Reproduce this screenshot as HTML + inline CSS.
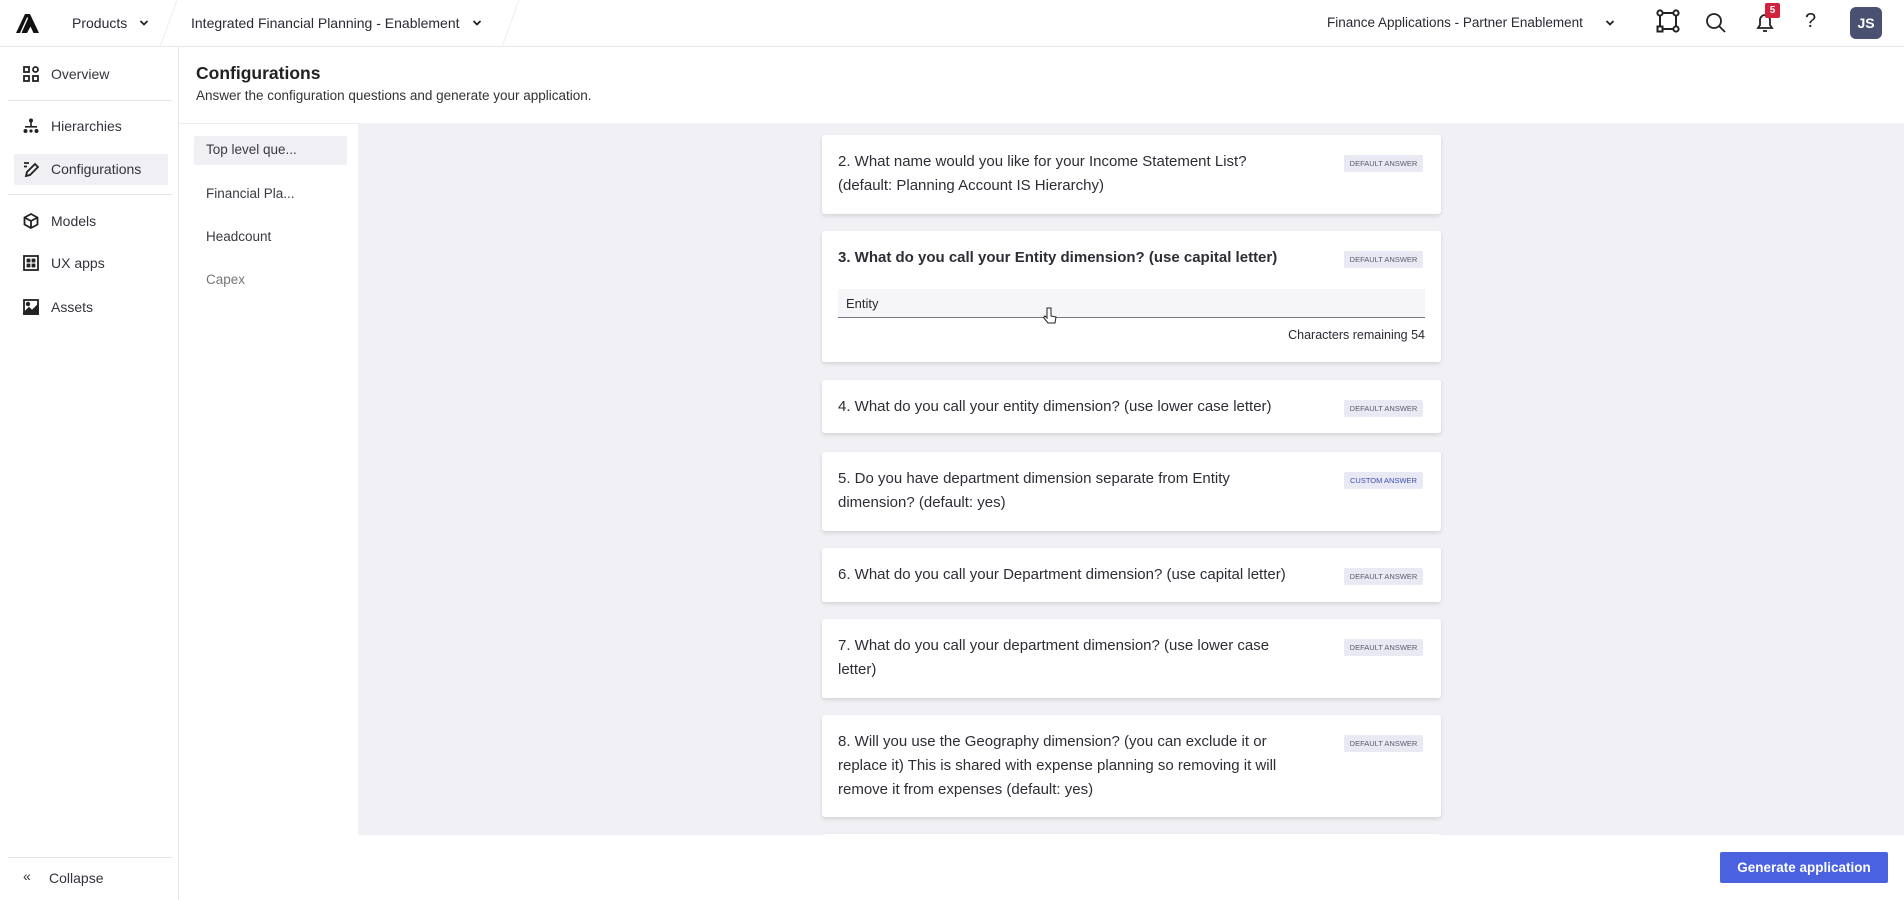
<!DOCTYPE html>
<html><head><meta charset="utf-8"><style>
*{box-sizing:border-box;margin:0;padding:0}
body{width:1904px;height:900px;overflow:hidden;background:#fff;font-family:"Liberation Sans",sans-serif;color:#2a2a33;position:relative}
.a{position:absolute}
.top{left:0;top:0;width:1904px;height:47px;border-bottom:1px solid #e6e6eb}
.t{font-size:14px;white-space:nowrap}
.side{left:0;top:47px;width:179px;height:853px;border-right:1px solid #e6e6eb}
.nav{left:51px;font-size:14px;color:#33333d}
.ic{left:23px;width:16px;height:16px}
.hr{height:1px;background:#e3e3e8}
.gray{left:358px;top:123px;width:1546px;height:712px;background:#f1f1f5;overflow:hidden}
.card{position:absolute;left:464px;width:619px;background:#fff;border-radius:3px;box-shadow:0 2px 4px rgba(0,0,0,.12)}
.q{position:absolute;left:16px;top:15px;font-size:15px;line-height:24px;color:#2d2d36;white-space:nowrap}
.b{position:absolute;right:18px;top:20px;width:79px;height:17px;background:#e8e9f3;border-radius:2px;font-size:7.5px;line-height:17px;text-align:center;color:#5a5c70;white-space:nowrap;overflow:hidden}
.sub{left:206px;font-size:13.5px;color:#3a3a44}
</style></head><body>
<div class="a top"></div>
<svg class="a" style="left:16px;top:14px" width="24" height="19" viewBox="0 0 24 19"><path d="M9 0h5l9 19h-5.5l-3-6.5L11 19H5.5L12 4.5 10.5 1z" fill="#111"/><path d="M9 0h3.5L4 19H0z" fill="#111"/></svg>
<div class="a t" style="left:72px;top:15px">Products</div>
<svg class="a" style="left:139px;top:19px" width="10" height="8" viewBox="0 0 10 8"><path d="M1.5 2l3.5 3.5L8.5 2" stroke="#222" stroke-width="1.8" fill="none"/></svg>
<div class="a" style="left:168px;top:0;width:1px;height:47px;background:#ececf0;transform:skewX(-20deg)"></div>
<div class="a t" style="left:191px;top:15px">Integrated Financial Planning - Enablement</div>
<svg class="a" style="left:472px;top:19px" width="10" height="8" viewBox="0 0 10 8"><path d="M1.5 2l3.5 3.5L8.5 2" stroke="#222" stroke-width="1.8" fill="none"/></svg>
<div class="a" style="left:510px;top:0;width:1px;height:47px;background:#ececf0;transform:skewX(-20deg)"></div>
<div class="a t" style="left:1327px;top:15px;font-size:13.5px">Finance Applications - Partner Enablement</div>
<svg class="a" style="left:1605px;top:19px" width="10" height="8" viewBox="0 0 10 8"><path d="M1.5 2l3.5 3.5L8.5 2" stroke="#222" stroke-width="1.8" fill="none"/></svg>
<svg class="a" style="left:1656px;top:9px" width="24" height="24" viewBox="0 0 24 24" fill="none" stroke="#222" stroke-width="2"><circle cx="4" cy="4" r="2.6"/><circle cx="20" cy="4" r="2.6"/><circle cx="20" cy="20" r="2.6"/><rect x="1.5" y="17.5" width="5" height="5"/><path d="M6.6 4h10.8M4 6.6v10.9M20 6.6v10.8M6.5 20h10.9"/></svg>
<svg class="a" style="left:1704px;top:11px" width="24" height="24" viewBox="0 0 24 24" fill="none" stroke="#222" stroke-width="1.8"><circle cx="10" cy="10" r="7"/><path d="M15 15l6 6"/></svg>
<svg class="a" style="left:1753px;top:10px" width="24" height="24" viewBox="0 0 24 24" fill="none" stroke="#222" stroke-width="1.8"><path d="M5 18h14l-2-3v-5a5 5 0 0 0-10 0v5z"/><path d="M10 21h4"/></svg>
<div class="a" style="left:1765px;top:3px;width:15px;height:15px;background:#d3203d;color:#fff;font-size:10px;font-weight:bold;text-align:center;line-height:15px;border-radius:2px">5</div>
<div class="a" style="left:1805px;top:10px;font-size:20px;color:#222">?</div>
<div class="a" style="left:1850px;top:7px;width:32px;height:32px;background:#4a5070;border-radius:6px;color:#fff;font-size:14px;font-weight:bold;text-align:center;line-height:32px">JS</div>

<div class="a side"></div>
<svg class="a ic" style="top:66px" viewBox="0 0 16 16" fill="none" stroke="#222" stroke-width="1.8"><rect x="1" y="1" width="5" height="5"/><rect x="10" y="1" width="5" height="5" rx="2.5"/><rect x="1" y="10" width="5" height="5"/><rect x="10" y="10" width="5" height="5"/></svg>
<div class="a nav" style="top:66px">Overview</div>
<div class="a hr" style="left:8px;top:100px;width:164px"></div>
<svg class="a ic" style="top:118px" viewBox="0 0 16 16" fill="#222"><circle cx="8" cy="2.5" r="2"/><rect x="7.2" y="4" width="1.6" height="5"/><rect x="2" y="8" width="12" height="1.6"/><circle cx="2.5" cy="13" r="2"/><circle cx="13.5" cy="13" r="2"/><circle cx="8" cy="13" r="1.6"/></svg>
<div class="a nav" style="top:118px">Hierarchies</div>
<div class="a" style="left:14px;top:154px;width:154px;height:31px;background:#efeff4;border-radius:2px"></div>
<svg class="a ic" style="top:161px" viewBox="0 0 16 16" fill="none" stroke="#222" stroke-width="1.8"><path d="M1 2h5M1 5.5h3M3 15l1-4 8-8 3 3-8 8z"/></svg>
<div class="a nav" style="top:161px">Configurations</div>
<div class="a hr" style="left:8px;top:194px;width:164px"></div>
<svg class="a ic" style="top:213px" viewBox="0 0 16 16" fill="none" stroke="#222" stroke-width="1.8"><path d="M8 1l6.5 3.5v7L8 15l-6.5-3.5v-7z M1.5 4.5L8 8l6.5-3.5M8 8v7"/></svg>
<div class="a nav" style="top:213px">Models</div>
<svg class="a ic" style="top:255px" viewBox="0 0 16 16" fill="none" stroke="#222" stroke-width="1.8"><rect x="1" y="1" width="14" height="14"/><rect x="4.5" y="4.5" width="2" height="2" fill="#222"/><rect x="9.5" y="4.5" width="2" height="2" fill="#222"/><rect x="4.5" y="9.5" width="2" height="2" fill="#222"/><rect x="9.5" y="9.5" width="2" height="2" fill="#222"/></svg>
<div class="a nav" style="top:255px">UX apps</div>
<svg class="a ic" style="top:299px" viewBox="0 0 16 16" fill="none" stroke="#222" stroke-width="1.8"><rect x="1" y="1" width="14" height="14"/><path d="M1 14l5-5 3 3 6-6v9H1z" fill="#222"/><circle cx="5" cy="5" r="1.3" fill="#222"/></svg>
<div class="a nav" style="top:299px">Assets</div>
<div class="a hr" style="left:8px;top:857px;width:164px"></div>
<div class="a" style="left:23px;top:868px;font-size:14px;color:#333">«</div>
<div class="a nav" style="left:49px;top:870px">Collapse</div>

<div class="a" style="left:196px;top:63px;font-size:17.5px;font-weight:bold;color:#222">Configurations</div>
<div class="a" style="left:196px;top:88px;font-size:13.5px;color:#333">Answer the configuration questions and generate your application.</div>
<div class="a" style="left:179px;top:123px;width:1725px;height:1px;background:#ececf0"></div>
<div class="a" style="left:194px;top:136px;width:153px;height:29px;background:#efeff4;border-radius:2px"></div>
<div class="a sub" style="top:142px">Top level que...</div>
<div class="a sub" style="top:186px">Financial Pla...</div>
<div class="a sub" style="top:229px">Headcount</div>
<div class="a sub" style="top:272px;color:#777">Capex</div>

<div class="a gray">
<div class="card" style="top:12px;height:79px"><div class="q">2. What name would you like for your Income Statement List?<br>(default: Planning Account IS Hierarchy)</div><div class="b">DEFAULT ANSWER</div></div>
<div class="card" style="top:108px;height:131px"><div class="q" style="font-weight:bold">3. What do you call your Entity dimension? (use capital letter)</div><div class="b">DEFAULT ANSWER</div>
<div style="position:absolute;left:16px;top:58px;width:587px;height:29px;background:#f6f6f8;border-bottom:1px solid #77788a;font-size:13px;line-height:29px;padding-left:8px">Entity</div>
<div style="position:absolute;right:16px;top:97px;font-size:12.5px">Characters remaining 54</div></div>
<div class="card" style="top:257px;height:53px"><div class="q">4. What do you call your entity dimension? (use lower case letter)</div><div class="b">DEFAULT ANSWER</div></div>
<div class="card" style="top:329px;height:79px"><div class="q">5. Do you have department dimension separate from Entity<br>dimension? (default: yes)</div><div class="b" style="color:#3e4fb5">CUSTOM ANSWER</div></div>
<div class="card" style="top:425px;height:54px"><div class="q">6. What do you call your Department dimension? (use capital letter)</div><div class="b">DEFAULT ANSWER</div></div>
<div class="card" style="top:496px;height:79px"><div class="q">7. What do you call your department dimension? (use lower case<br>letter)</div><div class="b">DEFAULT ANSWER</div></div>
<div class="card" style="top:592px;height:102px"><div class="q">8. Will you use the Geography dimension? (you can exclude it or<br>replace it) This is shared with expense planning so removing it will<br>remove it from expenses (default: yes)</div><div class="b">DEFAULT ANSWER</div></div>
<div class="card" style="top:711px;height:60px"></div>
</div>
<svg class="a" style="left:1043px;top:307px" width="14" height="17" viewBox="0 0 14 17"><path d="M4 1v10l-2-2-1.5 1.5L5 16h7l1-6-5-1V1z" fill="#fff" stroke="#222" stroke-width="1"/></svg>
<div class="a" style="left:1720px;top:852px;width:168px;height:31px;background:#4a62e0;border-radius:2px;color:#fff;font-size:13.5px;font-weight:bold;text-align:center;line-height:31px">Generate application</div>
</body></html>
